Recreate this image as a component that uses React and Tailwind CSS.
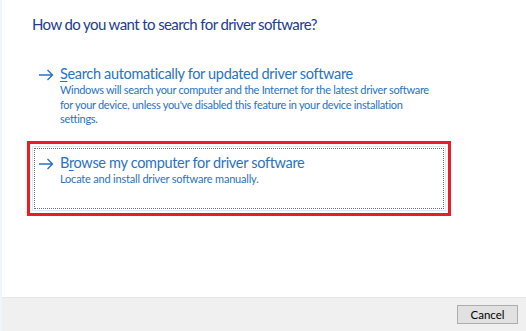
import React from "react";

function Arrow() {
  return (
    <svg width="16" height="12" viewBox="0 0 16 12" className="shrink-0">
      <path d="M1 6 H14.5 M9.5 1 L14.5 6 L9.5 11" fill="none" stroke="#2a72c2" strokeWidth="1.4" />
    </svg>
  );
}

export default function App() {
  const font = { fontFamily: 'Lato, "Noto Sans", sans-serif' };
  return (
    <div className="w-[526px] h-[331px] bg-white flex flex-col border-l-2 border-[#eef6fc]" style={font}>
      <div className="flex-1 flex flex-col pl-[30px] pr-[73px]">
        <div className="pt-[14px] text-[15px] leading-[20px] text-[#213d8d] tracking-[-0.6px]">
          How do you want to search for driver software?
        </div>
        <div className="mt-[31px] flex flex-col pl-[6px]">
          <div className="flex items-start gap-[6px]">
            <div className="pt-[4px]"><Arrow /></div>
            <div className="flex flex-col">
              <div className="text-[14.5px] leading-[18px] text-[#2a72c2] tracking-[-0.33px]">
                <span className="underline decoration-1 underline-offset-2">S</span>earch automatically for updated driver software
              </div>
              <div className="w-[375px] text-[11px] leading-[14.5px] text-[#2a72c2] tracking-[-0.3px]">
                Windows will search your computer and the Internet for the latest driver software for your device, unless you've disabled this feature in your device installation settings.
              </div>
            </div>
          </div>
        </div>
        <div className="mt-[14px] -ml-[5px] w-[424px] h-[75px] border-[3px] border-[#ec1c24] p-[2px]">
          <div className="h-full border border-[#dceaf7] p-px">
            <div className="h-full border border-dotted border-[#6b6b6b] flex items-start gap-[6px] pl-[3px] pt-[5px]">
              <div className="pt-[4px]"><Arrow /></div>
              <div className="flex flex-col">
                <div className="text-[14.5px] leading-[18px] text-[#2a72c2] tracking-[-0.32px]">
                  B<span className="underline decoration-1 underline-offset-2">r</span>owse my computer for driver software
                </div>
                <div className="text-[11px] leading-[14.5px] text-[#2a72c2] tracking-[-0.2px]">
                  Locate and install driver software manually.
                </div>
              </div>
            </div>
          </div>
        </div>
      </div>
      <div className="h-[34px] bg-[#f0f0f0] border-t border-[#e6e6e6] flex items-center justify-end pr-[8px]">
        <button className="w-[61px] h-[19px] border border-[#adadad] bg-[#e1e1e1] text-[11.5px] leading-none text-black" style={font}>
          Cancel
        </button>
      </div>
    </div>
  );
}
